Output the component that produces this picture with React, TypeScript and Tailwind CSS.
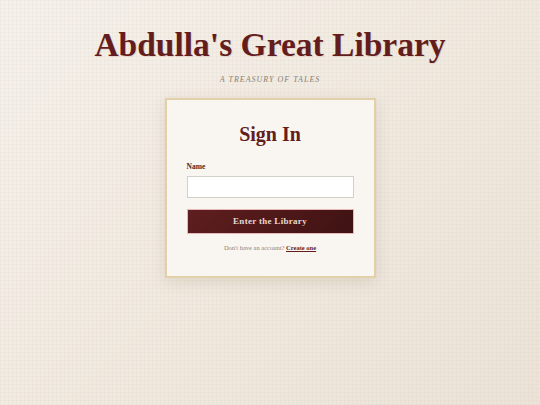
export default function App() {
  return (
    <div
      className="min-h-[405px] w-full bg-[linear-gradient(135deg,#f5f1ec_0%,#efe8df_60%,#ebe3d8_100%)] text-center"
      style={{ fontFamily: '"Liberation Serif", serif' }}
    >
      <div className="min-h-[405px] bg-[linear-gradient(rgba(200,180,150,0.08)_1px,transparent_1px),linear-gradient(90deg,rgba(200,180,150,0.08)_1px,transparent_1px)] bg-[size:4px_4px] flex flex-col items-center pt-[24px]">
        <h1 className="text-[33.5px] leading-[42px] font-bold text-[#641d1d] [text-shadow:1px_1px_0_rgba(210,160,140,0.3)]">
          Abdulla's Great Library
        </h1>
        <p className="mt-[8px] text-[8px] italic tracking-[1px] text-[#8a8274]">A TREASURY OF TALES</p>
        <div className="mt-[12px] w-[211px] border-2 border-[#e2d1a8] bg-[#f9f6f2] shadow-[0_4px_14px_rgba(120,90,60,0.15)] px-[20px] pt-[21px] pb-[23px]">
          <h2 className="text-[20px] leading-[26px] font-bold text-[#641d1d]">Sign In</h2>
          <div className="mt-[14px] text-left text-[7.5px] font-bold text-[#4a2a2a]">Name</div>
          <input className="mt-[4px] block w-full h-[22px] border border-[#cfd2c8] bg-white outline-none" />
          <button className="mt-[11px] block w-full h-[25px] border border-[#e8b8b8] bg-[linear-gradient(135deg,#5f1e1f,#3f1213)] text-[9px] font-bold tracking-[0.3px] text-[#e8d8d2]">
            Enter the Library
          </button>
          <p className="mt-[9px] text-[6.5px] text-[#8a8078]">
            Don't have an account?{" "}
            <a className="font-bold text-[#641d1d] underline">Create one</a>
          </p>
        </div>
      </div>
    </div>
  );
}
